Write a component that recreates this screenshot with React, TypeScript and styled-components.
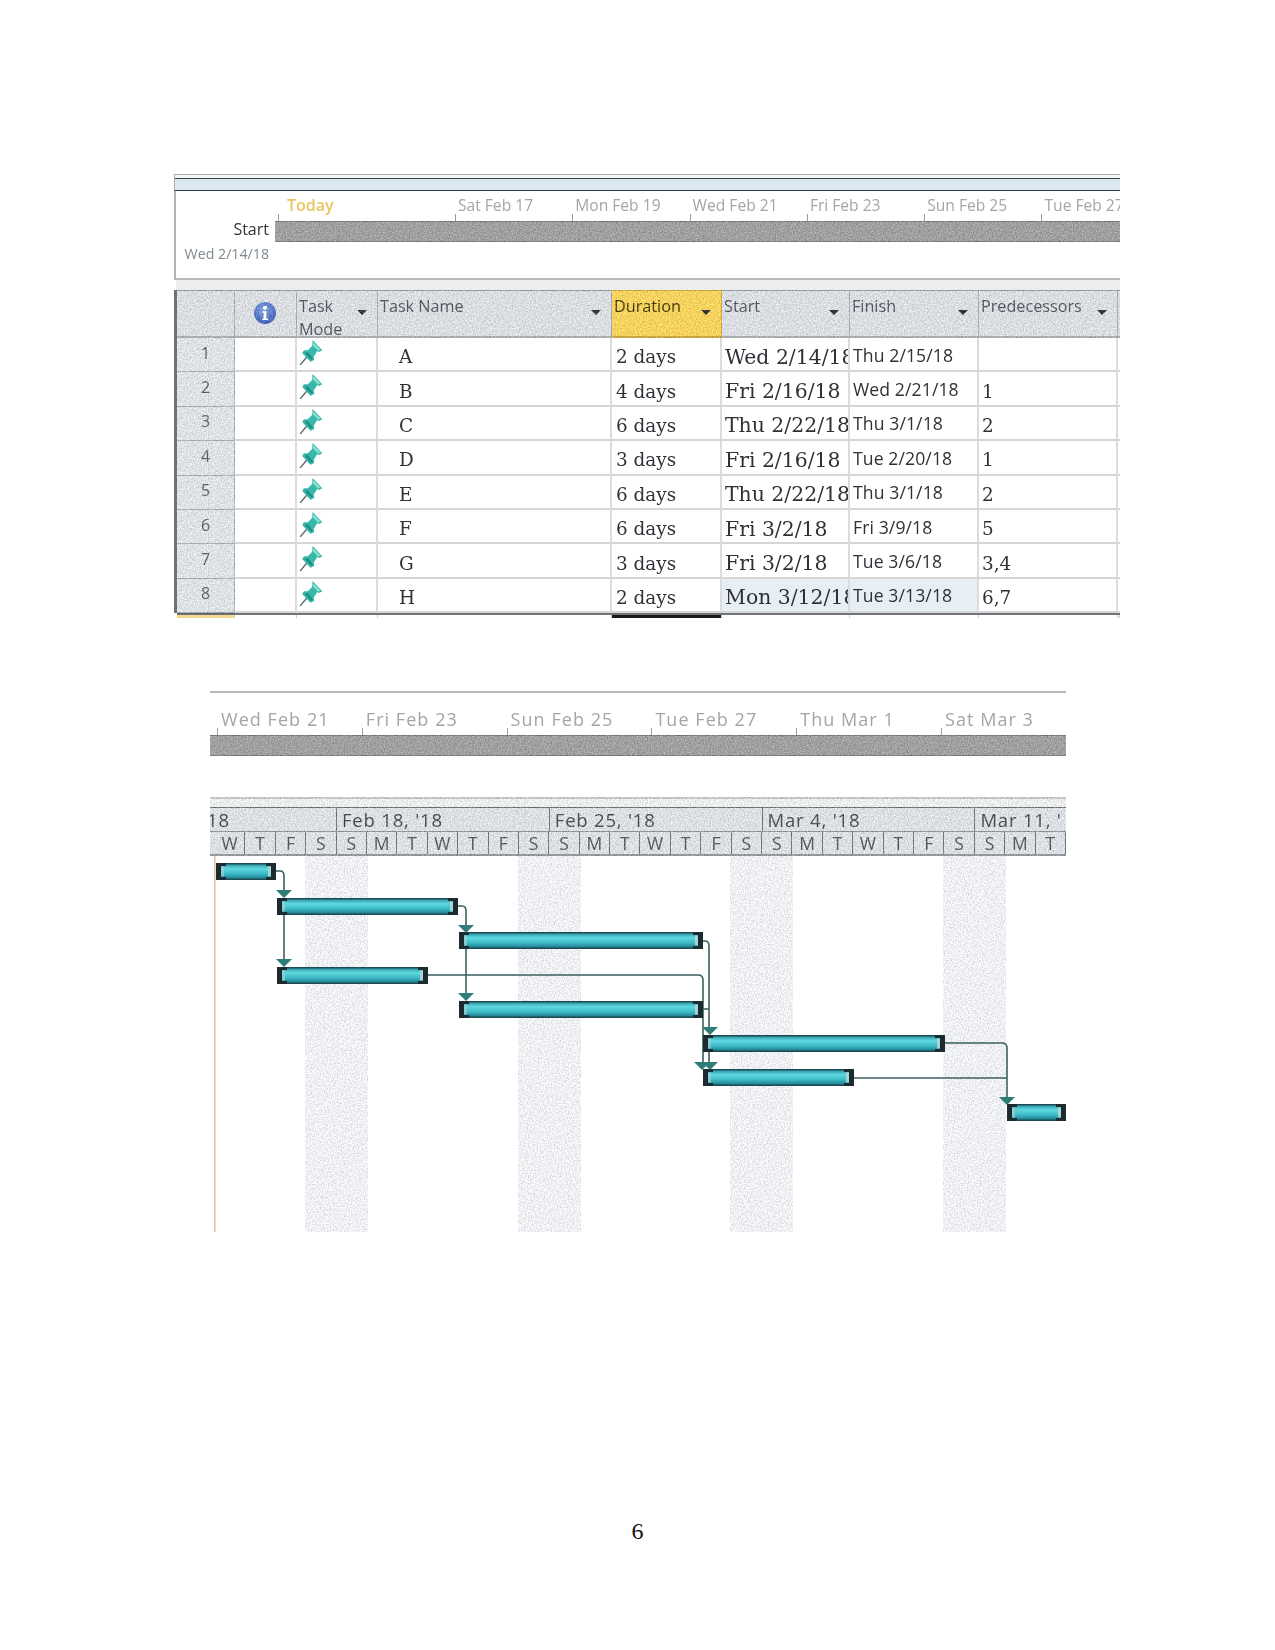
import React from "react";
import styled, { createGlobalStyle, css } from "styled-components";

const GlobalStyle = createGlobalStyle`
  html, body {
    margin: 0;
    padding: 0;
    background: #fff;
  }
`;

const texture = css`
  filter: url(#grain);
`;

const sans = `"Open Sans", "Liberation Sans", sans-serif`;
const serif = `"DejaVu Serif", "Liberation Serif", serif`;

const Page = styled.div`
  width: 1275px;
  height: 1650px;
  overflow: hidden;
  display: flex;
  flex-direction: column;
  padding-top: 174px;
  box-sizing: border-box;
  font-family: ${sans};
`;

const HiddenDefs = styled.svg`
  position: absolute;
  width: 0;
  height: 0;
`;

const TopFigure = styled.div`
  margin-left: 174px;
  width: 946px;
  display: flex;
  flex-direction: column;
  filter: blur(0.4px);
`;

const RibbonEdge = styled.div`
  height: 17px;
  box-sizing: border-box;
  background: #dce8f1;
  border-top: 1px solid #a8acae;
  border-left: 1px solid #a8acae;
  border-bottom: 1px solid #2f3f4c;
  box-shadow: inset 0 3px 0 #f4f6f7, inset 0 4px 0 #39434a;
`;

const Timeline = styled.div`
  height: 89px;
  display: flex;
  box-sizing: border-box;
  border-left: 2px solid #b3b3b3;
  border-bottom: 2px solid #b8b8b8;
`;

const TimelineSide = styled.div`
  width: 99px;
  flex: none;
  display: flex;
  flex-direction: column;
  align-items: flex-end;
  padding: 26px 6px 0 0;
  box-sizing: border-box;
`;

const StartWord = styled.div`
  font-size: 16px;
  line-height: 24px;
  color: #333;
`;

const StartDate = styled.div`
  font-size: 14.2px;
  line-height: 26px;
  color: #7f8a90;
`;

const TimelineMain = styled.div`
  flex: 1;
  min-width: 0;
  overflow: hidden;
`;

const Scale = styled.div<{ $pad: number }>`
  height: 30px;
  display: flex;
  padding-left: ${(p) => p.$pad}px;
`;

const ScaleMark = styled.div<{ $w: number; $today?: boolean }>`
  position: relative;
  flex: none;
  width: ${(p) => p.$w}px;
  padding: 2px 0 0 ${(p) => (p.$today ? 9 : 3)}px;
  box-sizing: border-box;
  white-space: nowrap;
  font-size: ${(p) => (p.$today ? 16 : 15.6)}px;
  line-height: 24px;
  color: ${(p) => (p.$today ? "#e9c65f" : "#a3a5a7")};
  font-weight: ${(p) => (p.$today ? 600 : 400)};

  &::before {
    content: "";
    position: absolute;
    left: 0;
    bottom: 0;
    width: 1px;
    height: 7px;
    background: #9d9d9d;
  }
`;

const BigMark = styled(ScaleMark)`
  padding: 13px 0 0 4px;
  font-size: 18px;
  letter-spacing: 1.05px;
  line-height: 26px;
`;

const GreyBar = styled.div`
  ${texture}
  height: 21px;
  background-color: #a0a0a0;
  border-top: 1px solid #7c7c7c;
  border-bottom: 1px solid #7f7f7f;
  box-sizing: border-box;
`;

const TableGap = styled.div`
  height: 10px;
  background: #ecedee;
  border-left: 2px solid #fff;
`;

const columns = "58px 62px 81px 234px 110px 128px 129px 139px 2px";

const Row = styled.div<{ $h: number }>`
  display: grid;
  grid-template-columns: ${columns};
  grid-template-rows: minmax(0, 1fr);
  height: ${(p) => p.$h}px;
  border-left: 3px solid #6e7276;
`;

const HeadCell = styled.div<{ $active?: boolean }>`
  ${texture}
  display: flex;
  align-items: flex-start;
  justify-content: space-between;
  box-sizing: border-box;
  min-height: 0;
  overflow: hidden;
  padding: 4px 10px 0 2px;
  font-size: 16.2px;
  line-height: 23px;
  color: ${(p) => (p.$active ? "#4b3d12" : "#555a60")};
  background-color: ${(p) => (p.$active ? "#f6d35f" : "#dadde1")};
  border-top: 1px solid ${(p) => (p.$active ? "#c9a63e" : "#989ca1")};
  border-right: 1px solid ${(p) => (p.$active ? "#c9a63e" : "#a8abaf")};
  border-bottom: 2px solid ${(p) => (p.$active ? "#c9a63e" : "#a9acb0")};
`;

const HeadIcon = styled(HeadCell)`
  justify-content: center;
  align-items: center;
  padding: 0 2px 2px 0;
`;

const HeadEnd = styled(HeadCell)`
  padding: 0;
  border-right: 0;
`;

const Arrow = styled.span`
  flex: none;
  margin-top: 15px;
  width: 0;
  height: 0;
  border-left: 5px solid transparent;
  border-right: 5px solid transparent;
  border-top: 5px solid #33363a;
`;

const NumberCell = styled.div`
  ${texture}
  background-color: #dfe2e5;
  display: flex;
  align-items: center;
  justify-content: center;
  padding: 0 0 4px 0;
  box-sizing: border-box;
  font-size: 16px;
  color: #5f6367;
  border-right: 1px solid #a8abaf;
  border-bottom: 1px solid #a9acb0;
`;

const Cell = styled.div<{ $serif?: boolean; $size?: number; $mark?: boolean; $indent?: number }>`
  display: flex;
  align-items: center;
  box-sizing: border-box;
  overflow: hidden;
  white-space: nowrap;
  padding-left: ${(p) => p.$indent ?? 3}px;
  padding-top: ${(p) => (p.$serif ? 5 : 1)}px;
  font-family: ${(p) => (p.$serif ? serif : sans)};
  font-size: ${(p) => p.$size ?? 18.4}px;
  color: #2e3136;
  background: ${(p) => (p.$mark ? "#e7eff5" : "#fff")};
  border-right: 2px solid #dcdcdc;
  border-bottom: 2px solid #d6d6d6;
`;

const FinishCell = styled(Cell)`
  font-size: 17.6px;
  letter-spacing: 0.1px;
  padding-left: 3px;
`;

const PinCell = styled(Cell)`
  align-items: flex-start;
  padding: 1px 0 0 1px;
`;

const EdgeCell = styled(Cell)`
  padding: 0;
  border-right: 0;
`;

const EndRow = styled(Row)`
  border-left: 0;
  margin-left: 3px;
  border-top: 2px solid #70747a;
  height: 3px;
  box-sizing: content-box;
`;

const EndCell = styled.div<{ $kind?: "gold" | "black" }>`
  height: 3px;
  border-right: 1px solid #cfcfcf;
  background: ${(p) => (p.$kind === "gold" ? "#f4d88e" : p.$kind === "black" ? "#1b1b1b" : "#fff")};
`;

const BottomFigure = styled.div`
  margin: 73px 0 0 210px;
  width: 856px;
  display: flex;
  flex-direction: column;
  filter: blur(0.4px);
`;

const FigureRule = styled.div`
  height: 2px;
  background: #b9b9b9;
`;

const BigScale = styled(Scale)`
  height: 42px;
`;

const GapBlank = styled.div`
  height: 41px;
`;

const ScaleTop = styled.div`
  ${texture}
  background-color: #eceded;
  border-top: 2px solid #c5c5c5;
  border-bottom: 1px solid #6f7478;
  height: 8px;
`;

const WeekRow = styled.div`
  ${texture}
  display: flex;
  height: 24px;
  box-sizing: border-box;
  background-color: #dcdfe3;
  border-bottom: 1px solid #8f9397;
  overflow: hidden;
`;

const Week = styled.div<{ $w: number; $shift?: number }>`
  flex: none;
  width: ${(p) => p.$w}px;
  box-sizing: border-box;
  border-right: 1px solid #74787c;
  padding-left: 5px;
  text-indent: ${(p) => p.$shift ?? 0}px;
  white-space: nowrap;
  font-size: 18.5px;
  line-height: 24px;
  letter-spacing: 0.8px;
  color: #4b4f54;
`;

const DayRow = styled.div`
  ${texture}
  display: flex;
  height: 24px;
  box-sizing: border-box;
  background-color: #dcdfe3;
  border-bottom: 2px solid #94989c;
  overflow: hidden;
  padding-left: 5px;
`;

const Day = styled.div`
  flex: none;
  width: 30.4px;
  box-sizing: border-box;
  border-right: 1px solid #74787c;
  text-align: center;
  font-size: 17.5px;
  line-height: 22px;
  color: #565a5f;
`;

const ChartSvg = styled.svg`
  display: block;
  width: 856px;
  height: 376px;
`;

const PageNumber = styled.div`
  position: absolute;
  top: 1517px;
  left: 0;
  width: 1275px;
  text-align: center;
  font-family: "Liberation Serif", serif;
  font-size: 24px;
  line-height: 28px;
  color: #111;
`;

const InfoIcon = () => (
  <svg width="24" height="24" viewBox="0 0 24 24">
    <defs>
      <radialGradient id="infoFill" cx="0.45" cy="0.35" r="0.7">
        <stop offset="0" stopColor="#8aa8e6" />
        <stop offset="1" stopColor="#3a5bb0" />
      </radialGradient>
    </defs>
    <circle cx="12" cy="12" r="11" fill="url(#infoFill)" />
    <circle cx="12" cy="6.8" r="2" fill="#fff" />
    <path d="M9.5 10.2h4v7.2h1.6v1.6H9.2v-1.6h1.4v-5.6H9.5z" fill="#fff" />
  </svg>
);

const PinIcon = () => (
  <svg width="26" height="27" viewBox="0 0 24 25">
    <path d="M2 24 L9.5 15" stroke="#4f6b70" strokeWidth="1.3" />
    <path d="M13.5 1 L22.5 10.5 L19.5 12 L17.8 11.2 L14.5 16.5 L15 19.5 L11.5 21 L3.8 13 L5.5 10.5 L9 10.5 L13 6.5 Z" fill="#38b8a9" />
    <path d="M14.2 3 L21 10 L18.5 10.6 L13.4 5.5 Z" fill="#86e2d4" />
    <path d="M6 12.8 L12 19.2 L14 18.4 L9 12 Z" fill="#1f8f86" />
  </svg>
);

const scaleTop = [
  { label: "Today", w: 177, today: true },
  { label: "Sat Feb 17", w: 117.3 },
  { label: "Mon Feb 19", w: 117.3 },
  { label: "Wed Feb 21", w: 117.3 },
  { label: "Fri Feb 23", w: 117.3 },
  { label: "Sun Feb 25", w: 117.3 },
  { label: "Tue Feb 27", w: 117.3 },
];

const scaleBottom = ["Wed Feb 21", "Fri Feb 23", "Sun Feb 25", "Tue Feb 27", "Thu Mar 1", "Sat Mar 3"];

const tasks = [
  { id: 1, name: "A", dur: "2 days", start: "Wed 2/14/18", finish: "Thu 2/15/18", pred: "" },
  { id: 2, name: "B", dur: "4 days", start: "Fri 2/16/18", finish: "Wed 2/21/18", pred: "1" },
  { id: 3, name: "C", dur: "6 days", start: "Thu 2/22/18", finish: "Thu 3/1/18", pred: "2" },
  { id: 4, name: "D", dur: "3 days", start: "Fri 2/16/18", finish: "Tue 2/20/18", pred: "1" },
  { id: 5, name: "E", dur: "6 days", start: "Thu 2/22/18", finish: "Thu 3/1/18", pred: "2" },
  { id: 6, name: "F", dur: "6 days", start: "Fri 3/2/18", finish: "Fri 3/9/18", pred: "5" },
  { id: 7, name: "G", dur: "3 days", start: "Fri 3/2/18", finish: "Tue 3/6/18", pred: "3,4" },
  { id: 8, name: "H", dur: "2 days", start: "Mon 3/12/18", finish: "Tue 3/13/18", pred: "6,7" },
];

const headers = [
  { label: "Task Mode" },
  { label: "Task Name" },
  { label: "Duration", active: true },
  { label: "Start" },
  { label: "Finish" },
  { label: "Predecessors" },
];

const weeks = [
  { label: "18", w: 127, shift: -8 },
  { label: "Feb 18, '18", w: 212.8 },
  { label: "Feb 25, '18", w: 212.8 },
  { label: "Mar 4, '18", w: 212.8 },
  { label: "Mar 11, '", w: 120 },
];

const days = "WTFSSMTWTFSSMTWTFSSMTWTFSSMT".split("");

// chart coordinates: x - 210, y - 856 from the page
const stripes = [95, 308, 520, 733];
const bars = [
  { x: 6, y: 7, w: 60 },
  { x: 67, y: 42, w: 181 },
  { x: 249, y: 76, w: 244 },
  { x: 67, y: 111, w: 151 },
  { x: 249, y: 145, w: 244 },
  { x: 493, y: 179, w: 242 },
  { x: 493, y: 213, w: 151 },
  { x: 797, y: 248, w: 59 },
];
const links = [
  "M66 15 H70 Q74 15 74 20 V36",
  "M74 50 V104",
  "M248 50 H252 Q256 50 256 55 V70",
  "M256 84 V138",
  "M218 119 H488 Q493 119 493 124 V207",
  "M493 85 H495 Q499 85 499 90 V173",
  "M499 187 V207",
  "M493 153 H499",
  "M735 187 H792 Q797 187 797 192 V241",
  "M644 222 H797",
];
const heads = [
  { x: 74, y: 34 },
  { x: 74, y: 103 },
  { x: 256, y: 69 },
  { x: 256, y: 137 },
  { x: 500, y: 171 },
  { x: 492, y: 206 },
  { x: 500, y: 206 },
  { x: 797, y: 241 },
];

const GanttBar = ({ x, y, w }: { x: number; y: number; w: number }) => {
  const h = 17;
  return (
    <g transform={`translate(${x} ${y})`}>
      <rect width={w} height={h} fill="#1d4a55" />
      <rect x="1" y="1.5" width={w - 2} height={h - 3} fill="url(#barFill)" />
      <rect x="5" y="3.5" width="3" height={h - 7} fill="#9fd0d2" opacity="0.7" />
      <rect x={w - 8} y="3.5" width="3" height={h - 7} fill="#bcdad6" opacity="0.8" />
      <path d={`M0 0h10v3h-5v${h - 6}h5v3h-10z`} fill="#1c2b2f" />
      <path d={`M${w} 0h-10v3h5v${h - 6}h-5v3h10z`} fill="#1c2b2f" />
    </g>
  );
};

const GanttChart = () => (
  <ChartSvg viewBox="0 0 856 376">
    <defs>
      <linearGradient id="barFill" x1="0" y1="0" x2="0" y2="1">
        <stop offset="0" stopColor="#2f9aa9" />
        <stop offset="0.3" stopColor="#5fd8df" />
        <stop offset="0.65" stopColor="#3fbcc8" />
        <stop offset="1" stopColor="#1f7f8f" />
      </linearGradient>
    </defs>
    {stripes.map((x) => (
      <rect key={x} x={x} y="0" width="63" height="376" fill="#eef0f3" filter="url(#grain)" />
    ))}
    <rect x="4" y="0" width="1.5" height="376" fill="#e0bd92" />
    {links.map((d) => (
      <path key={d} d={d} fill="none" stroke="#3c5f60" strokeWidth="1.6" />
    ))}
    {bars.map((b) => (
      <GanttBar key={`${b.x}-${b.y}`} {...b} />
    ))}
    {heads.map((a) => (
      <path key={`${a.x}-${a.y}`} d={`M${a.x - 8} ${a.y}h16l-8 8z`} fill="#2f7d78" />
    ))}
  </ChartSvg>
);

export default function App() {
  return (
    <Page>
      <GlobalStyle />
      <HiddenDefs aria-hidden="true">
        <filter id="grain" x="0" y="0" width="100%" height="100%" colorInterpolationFilters="sRGB">
          <feTurbulence type="fractalNoise" baseFrequency="0.7" numOctaves="2" seed="3" result="n" />
          <feColorMatrix in="n" type="matrix" values="1 0 0 0 0 1 0 0 0 0 1 0 0 0 0 0 0 0 0 1" result="g" />
          <feComposite in="SourceGraphic" in2="g" operator="arithmetic" k1="0" k2="1" k3="0.35" k4="-0.175" />
        </filter>
      </HiddenDefs>
      <TopFigure>
        <RibbonEdge />
        <Timeline>
          <TimelineSide>
            <StartWord>Start</StartWord>
            <StartDate>Wed 2/14/18</StartDate>
          </TimelineSide>
          <TimelineMain>
            <Scale $pad={3}>
              {scaleTop.map((m) => (
                <ScaleMark key={m.label} $w={m.w} $today={m.today}>
                  {m.label}
                </ScaleMark>
              ))}
            </Scale>
            <GreyBar />
          </TimelineMain>
        </Timeline>
        <TableGap />
        <Row $h={48}>
          <HeadCell />
          <HeadIcon>
            <InfoIcon />
          </HeadIcon>
          {headers.map((h) => (
            <HeadCell key={h.label} $active={h.active}>
              <span>{h.label}</span>
              <Arrow />
            </HeadCell>
          ))}
          <HeadEnd />
        </Row>
        {tasks.map((t, i) => (
          <Row key={t.id} $h={34.4}>
            <NumberCell>{t.id}</NumberCell>
            <Cell />
            <PinCell>
              <PinIcon />
            </PinCell>
            <Cell $serif $indent={21}>
              {t.name}
            </Cell>
            <Cell $serif $indent={4}>
              {t.dur}
            </Cell>
            <Cell $serif $size={20.4} $mark={i === 7}>
              {t.start}
            </Cell>
            <FinishCell $mark={i === 7}>{t.finish}</FinishCell>
            <Cell $serif>{t.pred}</Cell>
            <EdgeCell />
          </Row>
        ))}
        <EndRow $h={3}>
          <EndCell $kind="gold" />
          <EndCell />
          <EndCell />
          <EndCell />
          <EndCell $kind="black" />
          <EndCell />
          <EndCell />
          <EndCell />
          <EndCell />
        </EndRow>
      </TopFigure>
      <BottomFigure>
        <FigureRule />
        <BigScale $pad={7}>
          {scaleBottom.map((label) => (
            <BigMark key={label} $w={144.8}>
              {label}
            </BigMark>
          ))}
        </BigScale>
        <GreyBar />
        <GapBlank />
        <ScaleTop />
        <WeekRow>
          {weeks.map((w) => (
            <Week key={w.label} $w={w.w} $shift={w.shift}>
              {w.label}
            </Week>
          ))}
        </WeekRow>
        <DayRow>
          {days.map((d, i) => (
            <Day key={i}>{d}</Day>
          ))}
        </DayRow>
        <GanttChart />
      </BottomFigure>
      <PageNumber>6</PageNumber>
    </Page>
  );
}
